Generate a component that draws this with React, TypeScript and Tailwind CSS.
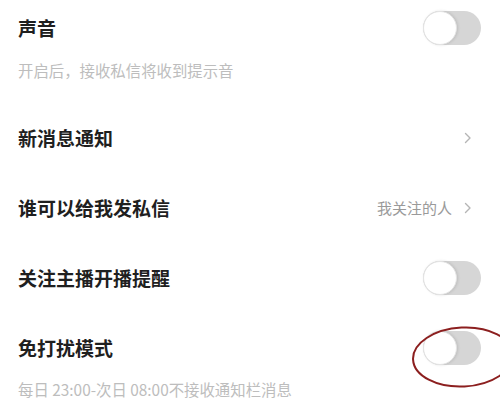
import React from "react";

const font = { fontFamily: '"Noto Sans CJK SC", "Noto Sans", sans-serif' };

function Toggle() {
  return (
    <div className="relative h-[34px] w-[58px] rounded-full bg-[#d6d6d6]">
      <div className="absolute left-0 top-0 h-[34px] w-[34px] rounded-full border border-[#e4e4e4] bg-white shadow-[1px_0_3px_rgba(0,0,0,0.12)]" />
    </div>
  );
}

function Chevron() {
  return (
    <svg width="8" height="12" viewBox="0 0 8 12" fill="none">
      <path d="M1.5 1.5 L6 6 L1.5 10.5" stroke="#b5b5b5" strokeWidth="1.4" strokeLinecap="round" strokeLinejoin="round" />
    </svg>
  );
}

function Title({ children }: { children: React.ReactNode }) {
  return <span className="text-[19px] font-semibold leading-[24px] text-[#1f1f1f]">{children}</span>;
}

export default function App() {
  return (
    <div className="relative h-[416px] w-[500px] overflow-hidden bg-white" style={font}>
      <div className="flex h-[56px] items-center justify-between pl-[18px] pr-[19px]">
        <Title>声音</Title>
        <Toggle />
      </div>
      <div className="pl-[18px] pt-[4px] text-[15.4px] leading-[20px] text-[#bdbdbd]">开启后，接收私信将收到提示音</div>

      <div className="mt-[23px] flex h-[70px] items-center justify-between pl-[18px] pr-[28px]">
        <Title>新消息通知</Title>
        <Chevron />
      </div>
      <div className="flex h-[70px] items-center justify-between pl-[18px] pr-[28px]">
        <Title>谁可以给我发私信</Title>
        <div className="flex items-center gap-[12px]">
          <span className="text-[15px] leading-[20px] text-[#9a9a9a]">我关注的人</span>
          <Chevron />
        </div>
      </div>
      <div className="flex h-[70px] items-center justify-between pl-[18px] pr-[19px]">
        <Title>关注主播开播提醒</Title>
        <Toggle />
      </div>
      <div className="mt-[7px] flex h-[56px] items-center justify-between pl-[18px] pr-[19px]">
        <Title>免打扰模式</Title>
        <Toggle />
      </div>
      <div className="pl-[18px] pt-[3px] text-[15.4px] leading-[20px] text-[#bdbdbd]">每日 23:00-次日 08:00不接收通知栏消息</div>

      <svg className="absolute left-[408px] top-[323px]" width="92" height="70" viewBox="0 0 92 70">
        <ellipse cx="55" cy="34" rx="50" ry="29.5" fill="none" stroke="#8c1f1f" strokeWidth="2" transform="rotate(-3 55 34)" />
      </svg>
    </div>
  );
}
